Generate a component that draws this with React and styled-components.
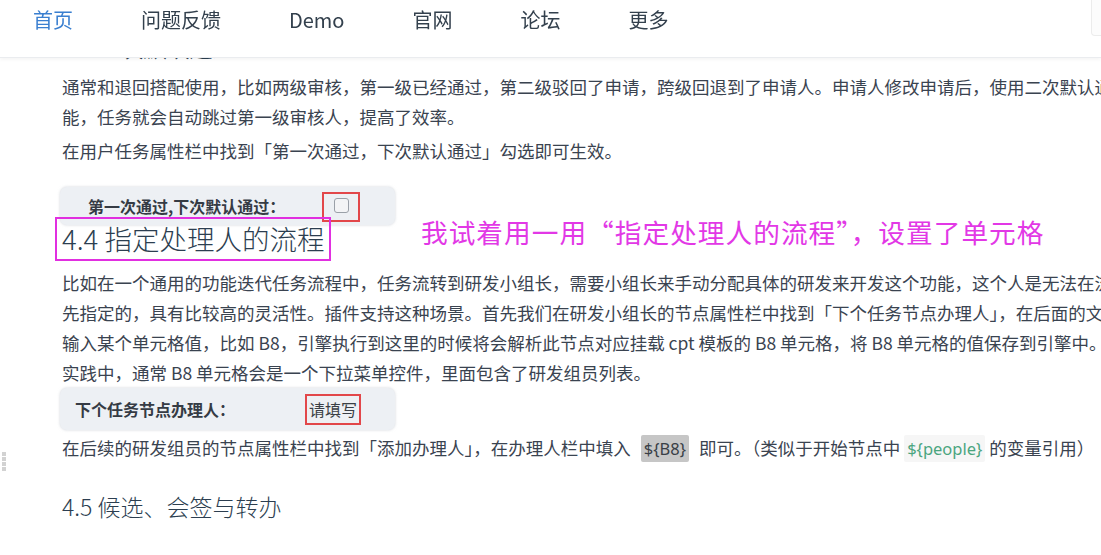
import React from "react";
import styled, { createGlobalStyle } from "styled-components";

const Global = createGlobalStyle`
  html, body { margin: 0; padding: 0; background: #fff; overflow: hidden; }
  body {
    font-family: "Noto Sans CJK SC", "Noto Sans", sans-serif;
    color: #3a4350;
    width: 1101px;
    height: 555px;
  }
`;

const Nav = styled.header`
  position: fixed;
  top: 0;
  left: 0;
  right: 0;
  height: 57px;
  background: #fff;
  border-bottom: 1px solid #eaecef;
  box-shadow: 0 2px 3px rgba(0, 0, 0, 0.04);
  z-index: 10;
  display: flex;
  align-items: flex-start;
  padding-left: 33px;
  gap: 68px;
`;

const NavItem = styled.a`
  font-size: 20px;
  line-height: 40px;
  color: ${(p) => (p.$active ? "#3a7fd0" : "#33404d")};
  text-decoration: none;
  white-space: nowrap;
`;

const SearchStub = styled.div`
  position: absolute;
  top: 0;
  right: -20px;
  width: 28px;
  height: 35px;
  border: 1px solid #ececec;
  border-top: none;
  border-radius: 0 0 0 4px;
  background: #fcfcfc;
`;

const Article = styled.main`
  padding: 31px 0 0 62px;
  width: 1300px;
`;

const H3 = styled.h3`
  margin: ${(p) => p.$m || "0"};
  font-size: 23px;
  line-height: 32px;
  font-weight: 300;
  color: #2c3e50;
  white-space: nowrap;
`;

const P = styled.p`
  margin: ${(p) => p.$m || "0"};
  font-size: 17.5px;
  line-height: 30px;
  white-space: nowrap;
`;

const Figure = styled.div`
  margin: ${(p) => p.$m || "0"};
  margin-left: -2px;
  width: 335px;
  height: ${(p) => p.$h}px;
  box-sizing: border-box;
  background: #edf0f4;
  border-radius: 7px;
  box-shadow: 0 0 3px rgba(180, 186, 196, 0.6);
  display: flex;
  align-items: center;
  padding-left: ${(p) => p.$pl}px;
`;

const FigLabel = styled.span`
  font-size: ${(p) => p.$fs}px;
  font-weight: 700;
  color: #353b44;
  width: ${(p) => p.$w}px;
  white-space: nowrap;
`;

const RedFrame = styled.div`
  box-sizing: border-box;
  width: ${(p) => p.$w}px;
  height: ${(p) => p.$h}px;
  border: 2px solid #e2474a;
  display: flex;
  align-items: center;
  justify-content: center;
  font-size: 16px;
  color: #3a3f46;
  align-self: ${(p) => (p.$low ? "flex-end" : "center")};
  margin-bottom: ${(p) => (p.$low ? 3 : 0)}px;
`;

const Checkbox = styled.span`
  width: 13px;
  height: 13px;
  border: 1px solid #9aa0a8;
  border-radius: 3px;
  background: #f3f4f6;
  margin-bottom: 3px;
`;

const HeadingRow = styled.div`
  display: grid;
  grid-template-columns: 359px auto;
  align-items: start;
`;

const H2 = styled.h2`
  position: relative;
  justify-self: start;
  margin: 0;
  font-size: 27.5px;
  line-height: 26px;
  font-weight: 300;
  color: #2c3e50;
  white-space: nowrap;
  &::before {
    content: "";
    position: absolute;
    top: -8px;
    bottom: -10px;
    left: -7px;
    right: -7px;
    border: 2px solid #e12fe0;
  }
`;

const Annotation = styled.span`
  margin-top: -6px;
  font-size: 26.7px;
  line-height: 26px;
  letter-spacing: 1px;
  font-weight: 400;
  color: #e238e6;
  white-space: nowrap;
`;

const Code = styled.code`
  font-family: "Noto Sans", "Noto Sans CJK SC", sans-serif;
  font-size: 16.5px;
  padding: 2px 3px;
  margin: 0 ${(p) => (p.$gap ? 10 : 4)}px;
  border-radius: 2px;
  background: ${(p) => (p.$sel ? "#c6c6c6" : "#f6f6f6")};
  color: ${(p) => (p.$green ? "#4ba57f" : "#3a3f46")};
`;

const DragHandle = styled.div`
  position: absolute;
  left: 2px;
  top: 452px;
  display: flex;
  flex-direction: column;
  gap: 1px;
  & > span {
    width: 4px;
    height: 4px;
    background: #d2d2d2;
  }
`;

export default function App() {
  return (
    <>
      <Global />
      <Nav>
        <NavItem $active>首页</NavItem>
        <NavItem>问题反馈</NavItem>
        <NavItem>Demo</NavItem>
        <NavItem>官网</NavItem>
        <NavItem>论坛</NavItem>
        <NavItem>更多</NavItem>
        <SearchStub />
      </Nav>
      <DragHandle>
        <span />
        <span />
        <span />
        <span />
      </DragHandle>
      <Article>
        <H3 $m="0 0 9px">4.3 二次默认通过</H3>
        <P>
          通常和退回搭配使用，比如两级审核，第一级已经通过，第二级驳回了申请，跨级回退到了申请人。申请人修改申请后，使用二次默认通过功
          <br />
          能，任务就会自动跳过第一级审核人，提高了效率。
        </P>
        <P $m="4px 0 0">在用户任务属性栏中找到「第一次通过，下次默认通过」勾选即可生效。</P>
        <Figure $m="21px 0 0" $h={38} $pl={28}>
          <FigLabel $fs={16} $w={234}>第一次通过,下次默认通过：</FigLabel>
          <RedFrame $w={38} $h={30} $low>
            <Checkbox />
          </RedFrame>
        </Figure>
        <HeadingRow>
          <H2>4.4 指定处理人的流程</H2>
          <Annotation>我试着用一用“指定处理人的流程”，设置了单元格</Annotation>
        </HeadingRow>
        <P $m="17px 0 0">
          比如在一个通用的功能迭代任务流程中，任务流转到研发小组长，需要小组长来手动分配具体的研发来开发这个功能，这个人是无法在流程中预
          <br />
          先指定的，具有比较高的灵活性。插件支持这种场景。首先我们在研发小组长的节点属性栏中找到「下个任务节点办理人」，在后面的文本框中
          <br />
          输入某个单元格值，比如 B8，引擎执行到这里的时候将会解析此节点对应挂载 cpt 模板的 B8 单元格，将 B8 单元格的值保存到引擎中。
          <br />
          实践中，通常 B8 单元格会是一个下拉菜单控件，里面包含了研发组员列表。
        </P>
        <Figure $h={42} $pl={15}>
          <FigLabel $fs={16} $w={230}>下个任务节点办理人：</FigLabel>
          <RedFrame $w={56} $h={31}>请填写</RedFrame>
        </Figure>
        <P $m="3px 0 0">
          在后续的研发组员的节点属性栏中找到「添加办理人」，在办理人栏中填入
          <Code $sel $gap>${"{B8}"}</Code>
          即可。（类似于开始节点中
          <Code $green>${"{people}"}</Code>
          的变量引用）
        </P>
        <H3 $m="26px 0 0">4.5 候选、会签与转办</H3>
      </Article>
    </>
  );
}
